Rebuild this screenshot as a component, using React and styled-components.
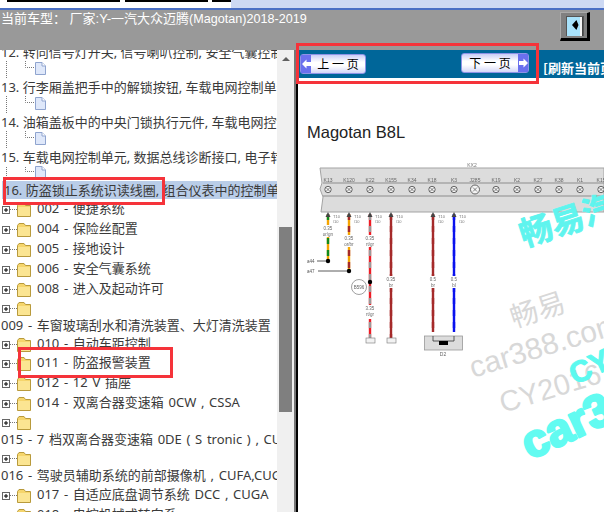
import React from 'react';
import styled, { createGlobalStyle } from 'styled-components';

const GlobalStyle = createGlobalStyle`
    html, body {
        margin: 0;
        padding: 0;
        background: #fff;
        overflow: hidden;
    }
`;

const CN = `"Noto Sans", "Noto Sans CJK SC", sans-serif`;

const treeRows = [
    { type: 'text', h: 18, label: '12. 转向信号灯开关, 信号喇叭控制, 安全气囊控制单元' },
    { type: 'doc' },
    { type: 'text', h: 18, label: '13. 行李厢盖把手中的解锁按钮, 车载电网控制单元' },
    { type: 'doc' },
    { type: 'text', h: 18, label: '14. 油箱盖板中的中央门锁执行元件, 车载电网控制单元' },
    { type: 'doc' },
    { type: 'text', h: 18, label: '15. 车载电网控制单元, 数据总线诊断接口, 电子转向柱' },
    { type: 'doc', h: 15 },
    { type: 'text', h: 18, label: '16. 防盗锁止系统识读线圈, 组合仪表中的控制单元', selected: true },
    { type: 'folder', h: 20, label: '002 - 便捷系统' },
    { type: 'folder', h: 20, label: '004 - 保险丝配置' },
    { type: 'folder', h: 20, label: '005 - 接地设计' },
    { type: 'folder', h: 20, label: '006 - 安全气囊系统' },
    { type: 'folder', h: 20, label: '008 - 进入及起动许可' },
    { type: 'folder', h: 18 },
    { type: 'text', h: 18, code: true, label: '009 - 车窗玻璃刮水和清洗装置、大灯清洗装置' },
    { type: 'folder', h: 18, label: '010 - 自动车距控制' },
    { type: 'folder', h: 20, label: '011 - 防盗报警装置' },
    { type: 'folder', h: 20, label: '012 - 12 V 插座' },
    { type: 'folder', h: 20, label: '014 - 双离合器变速箱 0CW , CSSA' },
    { type: 'folder', h: 18 },
    { type: 'text', h: 18, code: true, label: '015 - 7 档双离合器变速箱 0DE ( S tronic ) , CUFA' },
    { type: 'folder', h: 18 },
    { type: 'text', h: 18, code: true, label: '016 - 驾驶员辅助系统的前部摄像机 , CUFA,CUGA' },
    { type: 'folder', h: 20, label: '017 - 自适应底盘调节系统 DCC , CUGA' },
    { type: 'folder', h: 20, label: '018 - 电控机械式转向系' },
];

// 保险丝上的灯泡位置
const bulbs = [328, 349, 370, 391, 412, 432, 454, 475, 496, 517, 538, 559, 580, 601];
const bulbLabels = ['K13', 'K120', 'K22', 'K155', 'K34', 'K18', 'K3', 'J285', 'K19', 'K2', 'K27', 'K38', 'K1', 'K15'];

const wires = [
    { x: 328, bottom: 262, labelY: 231, colors: ['#f5a400', '#0f8a1c'], size: '0.35', name: 'or/gn' },
    { x: 349, bottom: 272, labelY: 241, colors: ['#f5a400', '#a52a2a'], size: '0.35', name: 'or/br' },
    { x: 370, bottom: 339, labelY: 241, colors: ['#ee1c25', '#999999'], size: '0.35', name: 'rt/gr' },
    { x: 391, bottom: 339, labelY: 282, colors: ['#a52a2a', '#a52a2a'], size: '0.35', name: 'br' },
    { x: 433, bottom: 333, labelY: 282, colors: ['#a52a2a', '#a52a2a'], size: '0.5', name: 'br' },
    { x: 454, bottom: 333, labelY: 282, colors: ['#0a12ee', '#0a12ee'], size: '0.5', name: 'bl' },
];

const DocIcon = () => (
    <svg width="47" height="17" viewBox="0 0 47 17">
        <path d="M6.5 0V17M25.5 0V6.5H35" stroke="#777" strokeDasharray="1 1" fill="none" />
        <path d="M35.5 1.5H42L45.5 5V13.5H35.5Z" fill="#dfe8fa" stroke="#8fa4cf" />
        <path d="M42 1.5V5H45.5" fill="#fff" stroke="#8fa4cf" />
    </svg>
);

const FolderIcon = () => (
    <svg width="32" height="18" viewBox="0 0 32 18">
        <path d="M10 9.5H17" stroke="#777" strokeDasharray="1 1" />
        <rect x="2.5" y="6.5" width="7" height="7" fill="#fff" stroke="#666" />
        <path d="M4 10H8M6 8V12" stroke="#000" />
        <path d="M17.5 5.5L19 3.5H24L25.5 5.5H30.5V16.5H17.5Z" fill="#f5d56c" stroke="#b89a3c" />
        <rect x="18" y="7" width="12" height="9" fill="#fbe592" />
    </svg>
);

const PanelToggleIcon = () => (
    <svg width="20" height="20" viewBox="0 0 20 20">
        <rect width="20" height="20" fill="#555" />
        <rect x="1" y="1" width="16" height="19" fill="#a8e2fb" />
        <rect x="14" y="1" width="2" height="19" fill="#f4f4f4" />
        <rect x="16" y="1" width="1" height="19" fill="#444" />
        <path d="M6 9L10 4.5H11V5.5L12.5 9L11 12.5V13.5H10Z" fill="#000" />
        <rect x="18" width="2" height="20" fill="#808080" />
    </svg>
);

const PagerArrow = ({ direction }) => (
    <svg width="9" height="10" viewBox="0 0 9 10">
        <path
            d={direction === 'left' ? 'M0 5L4.5 0.5V3H9V7H4.5V9.5Z' : 'M9 5L4.5 0.5V3H0V7H4.5V9.5Z'}
            fill="#fff"
        />
    </svg>
);

const WiringDiagram = () => (
    <Diagram viewBox="298 150 306 362" width="306" height="362">
        <path d="M320 169H604V213H321L323 198L320 190L322 184Z" fill="#dcdcdc" stroke="#a3a3a3" strokeWidth="1" />
        <path d="M323 184H604M323 197H604" stroke="#8c8c8c" strokeWidth="1" />
        <text x="472" y="168" fontSize="5" fill="#777" textAnchor="middle">KX2</text>
        {bulbs.map((x, i) => (
            <g key={x}>
                <text x={x} y="183" fontSize="5" fill="#666" textAnchor="middle">{bulbLabels[i]}</text>
                <circle cx={x} cy="190.5" r={i === 7 ? 4.5 : 3.2} fill="#f4f4f4" stroke="#555" strokeWidth="0.9" />
                <path d={`M${x - 2} ${188.5}L${x + 2} ${192.5}M${x + 2} ${188.5}L${x - 2} ${192.5}`} stroke="#555" strokeWidth="0.7" />
            </g>
        ))}
        {wires.map((w) => (
            <g key={w.x}>
                <path d={`M${w.x} 215V${w.bottom}`} stroke={w.colors[0]} strokeWidth="2.4" />
                <path d={`M${w.x} 215V${w.bottom}`} stroke={w.colors[1]} strokeWidth="2.4" strokeDasharray="6 6" />
                <path d={`M${w.x - 2.5} 218L${w.x} 213L${w.x + 2.5} 218Z`} fill="#444" />
                <rect x={w.x - 9} y={w.labelY - 5} width="18" height="12" fill="#fff" />
                <text x={w.x} y={w.labelY} fontSize="4.5" fill="#666" textAnchor="middle">{w.size}</text>
                <text x={w.x} y={w.labelY + 5.5} fontSize="4.5" fill="#666" textAnchor="middle">{w.name}</text>
                <text x={w.x + 5} y="219" fontSize="4" fill="#777">T10</text>
                <text x={w.x + 5} y="224" fontSize="4" fill="#777">/10</text>
            </g>
        ))}
        <rect x="361" y="306" width="18" height="14" fill="#fff" />
        <text x="370" y="311" fontSize="4.5" fill="#666" textAnchor="middle">3.35</text>
        <text x="370" y="317" fontSize="4.5" fill="#666" textAnchor="middle">rt/gr</text>

        <path d="M317 262H328M318 272H349" stroke="#333" strokeWidth="0.8" />
        <circle cx="328" cy="262" r="2.2" fill="#000" />
        <circle cx="349" cy="272" r="2.2" fill="#000" />
        <circle cx="370" cy="283" r="2.2" fill="#000" />
        <text x="307" y="264" fontSize="4.5" fill="#555">a44</text>
        <text x="307" y="274" fontSize="4.5" fill="#555">a47</text>
        <circle cx="359" cy="288" r="7.5" fill="#fff" stroke="#777" strokeWidth="0.7" />
        <text x="359" y="290" fontSize="4.5" fill="#666" textAnchor="middle">B596</text>

        <rect x="366" y="339" width="9" height="5" fill="#f2f2f2" stroke="#777" strokeWidth="0.6" />
        <rect x="387" y="339" width="9" height="5" fill="#f2f2f2" stroke="#777" strokeWidth="0.6" />
        <rect x="424.5" y="337" width="38" height="14" fill="#dcdcdc" stroke="#999" strokeWidth="0.8" />
        <path d="M433 337V342H454V337" fill="none" stroke="#333" strokeWidth="0.8" />
        <rect x="439" y="342" width="9" height="4" fill="#000" />
        <text x="443" y="357" fontSize="5" fill="#666" textAnchor="middle">D2</text>
    </Diagram>
);

// 水印文字
const watermarks = [
    { text: '畅易汽', x: 524, y: 247, size: 33, angle: -18, color: '#5ff4ee', weight: 700, stroke: 0.8 },
    { text: '畅易', x: 514, y: 328, size: 28, angle: -18, color: '#d8d8d8', weight: 400, stroke: 0 },
    { text: 'car388.com', x: 473, y: 378, size: 30, angle: -17, color: '#d8d8d8', weight: 400, stroke: 0 },
    { text: 'CY2016', x: 503, y: 413, size: 29, angle: -17, color: '#d8d8d8', weight: 400, stroke: 0 },
    { text: 'CY', x: 575, y: 385, size: 30, angle: -25, color: '#5cf9ef', weight: 700, stroke: 1 },
    { text: 'car388', x: 530, y: 460, size: 46, angle: -25, color: '#62fbf1', weight: 700, stroke: 2.5 },
];

const Watermarks = () => (
    <WatermarkLayer viewBox="0 0 604 512" width="604" height="512">
        {watermarks.map((m) => (
            <text
                key={m.text}
                x={m.x}
                y={m.y}
                fontSize={m.size}
                fill={m.color}
                stroke={m.color}
                strokeWidth={m.stroke}
                strokeLinejoin="round"
                fontWeight={m.weight}
                fontFamily={`"Liberation Sans", "Noto Sans CJK SC", sans-serif`}
                transform={`rotate(${m.angle} ${m.x} ${m.y})`}
            >
                {m.text}
            </text>
        ))}
    </WatermarkLayer>
);

const TreeRow = ({ row }) => {
    if (row.type === 'doc') {
        return <Row $h={row.h || 17}><DocIcon /></Row>;
    }
    if (row.type === 'folder') {
        return (
            <Row $h={row.h}>
                <FolderIcon />
                {row.label && <RowLabel $indent={5} $code>{row.label}</RowLabel>}
            </Row>
        );
    }
    return (
        <Row $h={row.h} $selected={row.selected}>
            <RowLabel $indent={row.selected ? 2 : 1} $code={row.code}>{row.label}</RowLabel>
        </Row>
    );
};

const App = () => (
    <Page>
        <GlobalStyle />
        <TopStrip>
            <Tab $w={113} $ml={7} />
            <Tab $w={83} $ml={5} />
            <Tab $w={19} $ml={4} />
            <TitleBarEnd />
        </TopStrip>
        <Header>
            <CarModel>当前车型：&nbsp;厂家:Y-一汽大众迈腾<Latin>(Magotan)2018-2019</Latin></CarModel>
            <ToggleButton><PanelToggleIcon /></ToggleButton>
        </Header>
        <Body>
            <TreePane>
                <Tree>
                    {treeRows.map((row, i) => <TreeRow row={row} key={i} />)}
                </Tree>
                <ScrollBar>
                    <ScrollArrow />
                    <ScrollThumb />
                </ScrollBar>
            </TreePane>
            <Splitter />
            <ContentPane>
                <PagerBar>
                    <PagerButton $prev>
                        <PagerArrowBox><PagerArrow direction="left" /></PagerArrowBox>
                        <PagerText>上 一 页</PagerText>
                    </PagerButton>
                    <PagerButton>
                        <PagerText>下 一 页</PagerText>
                        <PagerArrowBox><PagerArrow direction="right" /></PagerArrowBox>
                    </PagerButton>
                    <RefreshLink>[刷新当前页]</RefreshLink>
                </PagerBar>
                <DocTitle>Magotan B8L</DocTitle>
                <WiringDiagram />
            </ContentPane>
        </Body>
        <Watermarks />
        <Callout $x={3} $y={177} $w={162} $h={28} />
        <Callout $x={18} $y={347} $w={155} $h={31} />
        <Callout $x={296} $y={43} $w={243} $h={41} />
    </Page>
);

export default App;

const Page = styled.div`
    position: relative;
    width: 604px;
    height: 512px;
    overflow: hidden;
    display: flex;
    flex-direction: column;
    background: #fff;
`;

const TopStrip = styled.div`
    height: 8px;
    display: flex;
    align-items: flex-start;
    background: #fff;
    border-bottom: 2px solid #4a6fc4;
    flex-shrink: 0;
`;

const Tab = styled.div`
    width: ${(p) => p.$w}px;
    margin-left: ${(p) => p.$ml}px;
    height: 2px;
    background: #000;
    flex-shrink: 0;
`;

const TitleBarEnd = styled.div`
    flex: 1;
    height: 100%;
    background: #cdd9f3;
`;

const Header = styled.div`
    height: 40px;
    flex-shrink: 0;
    background: #999;
    display: flex;
    justify-content: space-between;
    align-items: flex-start;
    padding: 0 14px 0 1px;
`;

const CarModel = styled.div`
    font-family: "Liberation Sans", "Noto Sans CJK SC", sans-serif;
    font-size: 13px;
    line-height: 18px;
    color: #fff;
    white-space: nowrap;
`;

const Latin = styled.span`
    font-size: 12.6px;
`;

const ToggleButton = styled.div`
    box-sizing: border-box;
    margin-top: 2px;
    width: 30px;
    height: 29px;
    padding: 3px 0 0 5px;
    background: #808080;
    border-style: solid;
    border-width: 1px 3px 3px 1px;
    border-color: #aaa #000 #000 #aaa;
`;

const Body = styled.div`
    flex: 1;
    min-height: 0;
    display: flex;
`;

const TreePane = styled.div`
    width: 294px;
    display: flex;
    flex-shrink: 0;
    overflow: hidden;
`;

const Tree = styled.div`
    width: 277px;
    flex-shrink: 0;
    margin-top: -7px;
    overflow: hidden;
    font-family: ${CN};
    font-size: 13px;
    color: #3a3a3a;
`;

const Row = styled.div`
    height: ${(p) => p.$h}px;
    display: flex;
    align-items: center;
    white-space: nowrap;
    overflow: hidden;
    margin-left: ${(p) => (p.$selected ? '2px' : 0)};
    background: ${(p) => (p.$selected ? '#b9cde8' : 'transparent')};
`;

const RowLabel = styled.span`
    padding-left: ${(p) => p.$indent}px;
    padding-bottom: ${(p) => (p.$code ? 2 : 1)}px;
    line-height: 18px;
    word-spacing: ${(p) => (p.$code ? '1.3px' : 0)};
`;

const ScrollBar = styled.div`
    width: 17px;
    background: #f0f0f0;
    padding-top: 7px;
    display: flex;
    flex-direction: column;
    align-items: center;
`;

const ScrollArrow = styled.div`
    width: 0;
    height: 0;
    border-left: 4px solid transparent;
    border-right: 4px solid transparent;
    border-bottom: 4px solid #606060;
`;

const ScrollThumb = styled.div`
    width: 13px;
    height: 185px;
    margin-top: 166px;
    background: #7f7f7f;
`;

const Splitter = styled.div`
    width: 4px;
    flex-shrink: 0;
    background: linear-gradient(90deg, #777 0 50%, #000 50% 100%);
`;

const ContentPane = styled.div`
    flex: 1;
    min-width: 0;
    display: flex;
    flex-direction: column;
    overflow: hidden;
`;

const PagerBar = styled.div`
    height: 28px;
    flex-shrink: 0;
    background: #006699;
    display: flex;
    align-items: flex-start;
    padding-left: 2px;
    white-space: nowrap;
`;

const PagerButton = styled.div`
    box-sizing: border-box;
    flex-shrink: 0;
    width: ${(p) => (p.$prev ? 66 : 68)}px;
    height: 20px;
    margin-top: ${(p) => (p.$prev ? 4 : 3)}px;
    margin-right: ${(p) => (p.$prev ? 95 : 14)}px;
    display: flex;
    align-items: center;
    border: 1px solid #8d93e6;
    border-radius: 3px;
    background: linear-gradient(180deg, #c9cdf6 0%, #fff 40%, #fff 60%, #d4d7f8 100%);
`;

const PagerArrowBox = styled.div`
    width: 10px;
    height: 100%;
    flex-shrink: 0;
    display: flex;
    align-items: center;
    justify-content: center;
    background: #6a70ee;
`;

const PagerText = styled.div`
    flex: 1;
    text-align: center;
    font-family: "Noto Sans CJK SC", sans-serif;
    font-size: 12px;
    line-height: 18px;
    color: #000;
`;

const RefreshLink = styled.div`
    margin-top: 10px;
    font-family: "Noto Sans CJK SC", sans-serif;
    font-size: 13px;
    line-height: 16px;
    font-weight: 700;
    color: #fff;
`;

const DocTitle = styled.div`
    margin: 44px 0 0 9px;
    font-family: "Liberation Sans", sans-serif;
    font-size: 16.5px;
    line-height: 20px;
    color: #222;
`;

const Diagram = styled.svg`
    display: block;
    margin-top: 7px;
    flex-shrink: 0;
    font-family: "Liberation Sans", sans-serif;
    filter: blur(0.5px);
`;

const WatermarkLayer = styled.svg`
    position: absolute;
    left: 0;
    top: 0;
    pointer-events: none;
`;

const Callout = styled.div`
    position: absolute;
    left: ${(p) => p.$x}px;
    top: ${(p) => p.$y}px;
    width: ${(p) => p.$w}px;
    height: ${(p) => p.$h}px;
    box-sizing: border-box;
    border: 3px solid #f5333a;
    pointer-events: none;
`;
